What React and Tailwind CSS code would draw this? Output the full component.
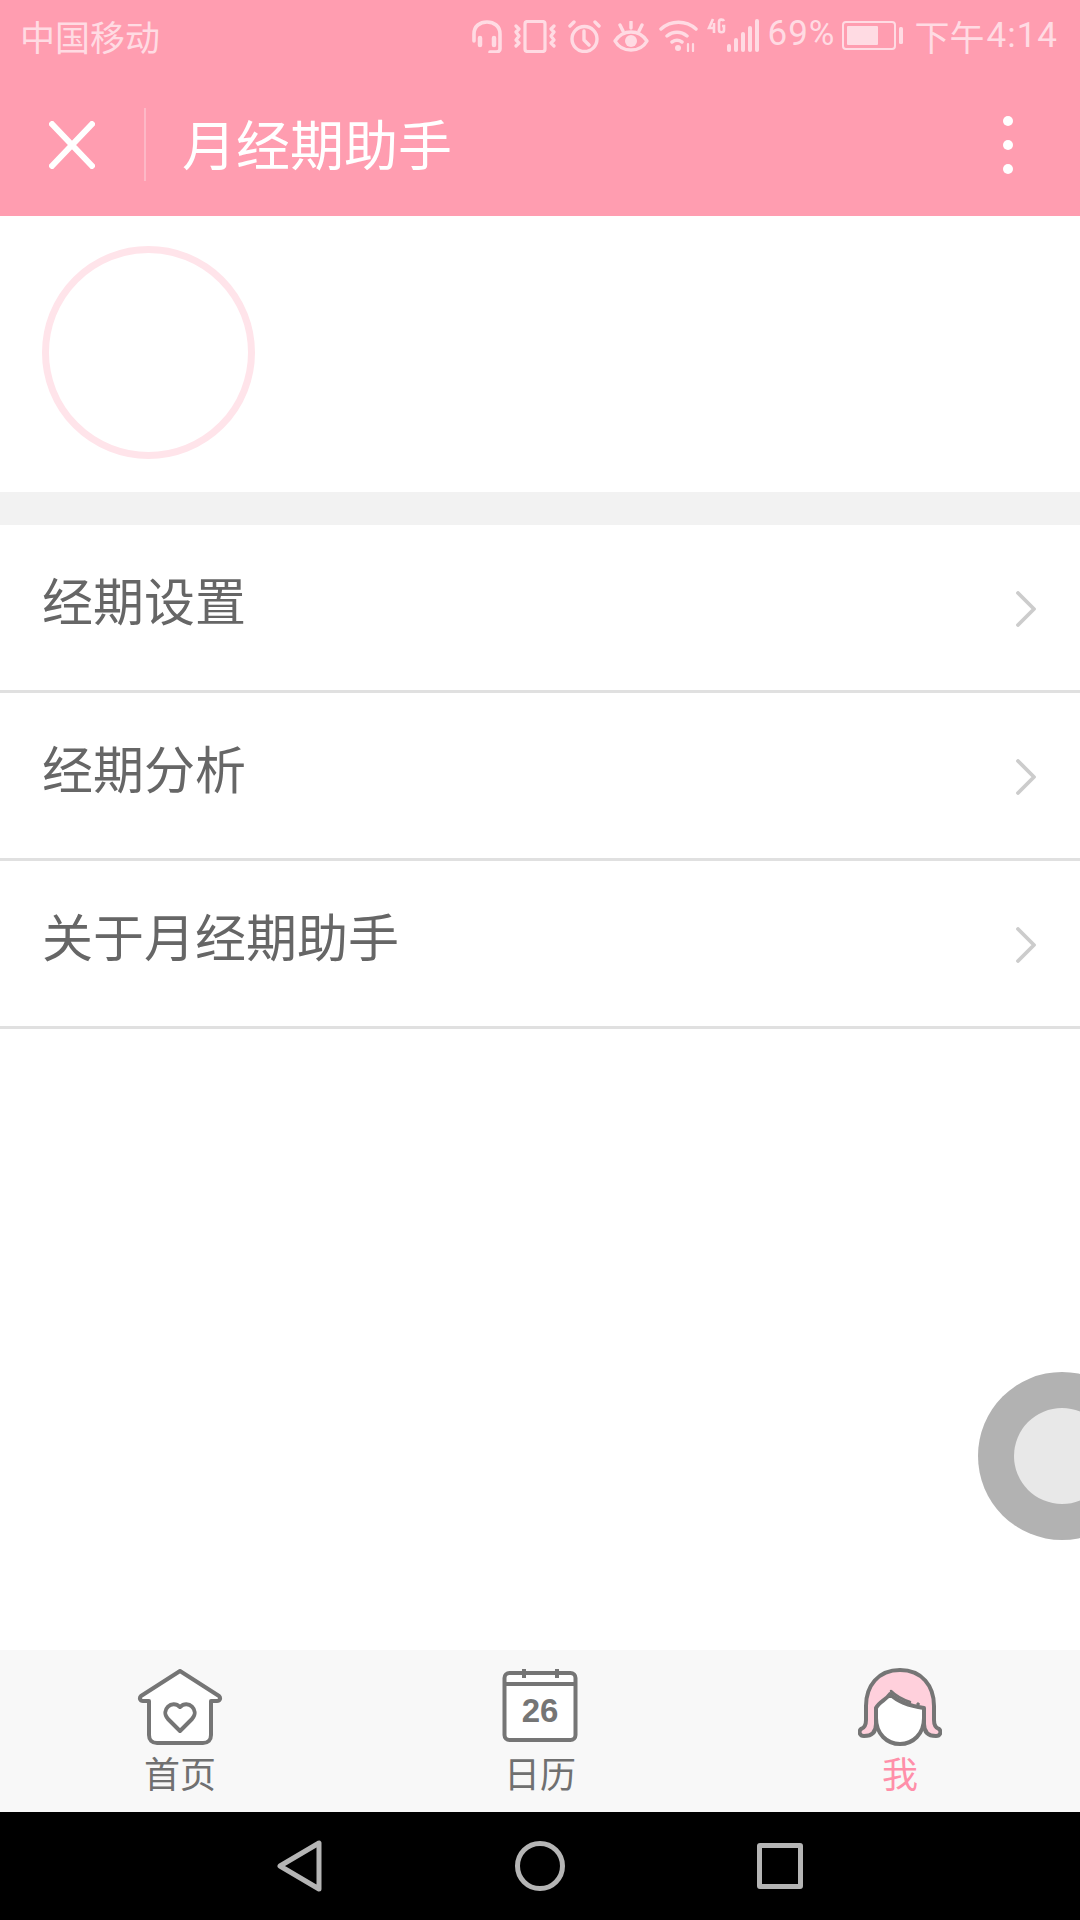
const CJK = { fontFamily: '"Noto Sans CJK SC", "Noto Sans", sans-serif' };

function StatusIcons() {
  const c = "#ffdbe3";
  return (
    <div className="flex items-start">
      <svg width="30" height="33" viewBox="0 0 30 33" fill="none" stroke={c} strokeWidth="3.6" strokeLinecap="round" className="mt-[20px] ml-[2px]">
        <path d="M2 21V14C2 6 8 2 15 2s13 4 13 12v15c0 2-2 3-4 3h-6" />
        <path d="M8 18v7M22 18v7" strokeWidth="4.5" />
      </svg>
      <svg width="42" height="33" viewBox="0 0 42 33" fill="none" stroke={c} strokeWidth="3.2" strokeLinecap="round" strokeLinejoin="round" className="mt-[20px] ml-[12px]">
        <rect x="11" y="1.5" width="20" height="30" rx="2.5" />
        <path d="M2 6l3 3-3 3 3 4-3 4 3 3-3 3M40 6l-3 3 3 3-3 4 3 4-3 3 3 3" />
      </svg>
      <svg width="33" height="33" viewBox="0 0 33 33" fill="none" stroke={c} strokeWidth="3.4" strokeLinecap="round" strokeLinejoin="round" className="mt-[20px] ml-[12px]">
        <circle cx="16.5" cy="19" r="12.5" />
        <path d="M16 11v9l5 5M2 6l4-4M31 6l-4-4" />
      </svg>
      <svg width="36" height="31" viewBox="0 0 36 31" fill="none" stroke={c} strokeWidth="3.4" strokeLinecap="round" strokeLinejoin="round" className="mt-[21px] ml-[12px]">
        <path d="M2 20c4-6 9-9 16-9s12 3 16 9c-4 7-9 9-16 9S6 27 2 20z" />
        <circle cx="18" cy="20" r="6" fill={c} stroke="none" />
        <path d="M18 1v6M7 4l3 6M29 4l-3 6" />
      </svg>
      <svg width="39" height="32" viewBox="0 0 39 32" fill="none" stroke={c} strokeWidth="3.4" strokeLinecap="round" className="mt-[20px] ml-[10px]">
        <path d="M2 9c10-9 25-9 35 0M8 16c6-5 14-5 20 0M13 22c3-2 7-2 10 0" />
        <circle cx="19" cy="28" r="3" fill={c} stroke="none" />
        <path d="M29 24v7M34 24v7" strokeWidth="2.2" />
      </svg>
      <svg width="19" height="16" viewBox="0 0 19 16" fill="none" stroke={c} strokeWidth="2.6" className="mt-[18px] ml-[9px]">
        <path d="M6 1L2 10h6M7 5v10" />
        <path d="M17 3c-1-2-5-2-5 1v8c0 3 5 3 5 0V8h-2" />
      </svg>
      <svg width="35" height="33" viewBox="0 0 35 33" fill={c} className="mt-[19px]">
        <rect x="1" y="25" width="4" height="8" rx="2" />
        <rect x="8" y="19" width="4" height="14" rx="2" />
        <rect x="15" y="13" width="4" height="20" rx="2" />
        <rect x="22" y="7" width="4" height="26" rx="2" />
        <rect x="29" y="0" width="4" height="33" rx="2" />
      </svg>
      <span className="mt-[14px] ml-[6px] w-[65px] text-[35px] leading-[40px] tracking-[1px] whitespace-nowrap" style={{ fontFamily: "Roboto, sans-serif", color: c }}>69%</span>
      <svg width="61" height="29" viewBox="0 0 61 29" fill="none" className="mt-[21px] ml-[10px]">
        <rect x="1" y="1" width="52" height="27" rx="3" stroke={c} strokeWidth="2" />
        <rect x="5" y="5" width="31" height="19" rx="1" fill={c} />
        <rect x="57" y="6" width="4" height="17" rx="1.5" fill={c} />
      </svg>
      <span className="mt-[15px] ml-[11px] text-[35px] leading-[42px] whitespace-nowrap" style={{ ...CJK, color: c }}>下午</span>
      <span className="mt-[15px] ml-[2px] text-[35px] leading-[42px] tracking-[1px]" style={{ fontFamily: "Roboto, sans-serif", color: c }}>4:14</span>
    </div>
  );
}

function Chevron() {
  return (
    <svg width="20" height="36" viewBox="0 0 20 36" fill="none" stroke="#cccccc" strokeWidth="3.8" strokeLinecap="round" strokeLinejoin="round" className="mt-[3px]">
      <path d="M2 2l16 16L2 34" />
    </svg>
  );
}

function Row({ label }) {
  return (
    <div className="h-[168px] border-b-[3px] border-[#e0e0e0] flex items-center justify-between pl-[42px] pr-[44px]">
      <span className="text-[51px] leading-[64px] text-[#666666] mb-[17px]" style={CJK}>{label}</span>
      <Chevron />
    </div>
  );
}

function HomeIcon() {
  return (
    <svg width="86" height="76" viewBox="0 0 86 76" fill="#ffffff" stroke="#757575" strokeWidth="4" strokeLinejoin="round" strokeLinecap="round">
      <path d="M43 2L82 27c2 2 1 5-2 5h-6v34c0 5-3 8-8 8H20c-5 0-8-3-8-8V32H6c-3 0-4-3-2-5z" />
      <path d="M43 62L31 50c-8-9 4-20 12-12 8-8 20 3 12 12z" fill="#ffffff" />
    </svg>
  );
}

function CalendarIcon() {
  return (
    <svg width="76" height="76" viewBox="0 0 76 76" fill="#ffffff" stroke="#757575" strokeWidth="4">
      <rect x="2.5" y="4" width="71" height="67" rx="5" />
      <path d="M2 15h72M22 0v9M55 0v9" fill="none" />
      <text x="38" y="53" textAnchor="middle" fontSize="33" fontWeight="700" fill="#757575" stroke="none" style={{ fontFamily: '"Liberation Sans", sans-serif' }}>26</text>
    </svg>
  );
}

function GirlIcon() {
  return (
    <svg width="84" height="78" viewBox="0 0 84 78" fill="none" stroke="#757575" strokeWidth="4" strokeLinejoin="round" strokeLinecap="round">
      <path d="M18 50c0 16 11 26 24 26s24-10 24-26V28H18z" fill="#ffffff" />
      <path d="M42 2C20 2 8 18 8 38v14c0 5-2 8-5 9-3 3-1 7 3 7 7 0 12-3 12-12V40c3-6 10-8 14-14 8 8 20 12 34 14v16c0 9 5 12 12 12 4 0 6-4 3-7-3-1-5-4-5-9V38C76 18 64 2 42 2z" fill="#ffd0dc" />
      <path d="M33 23c6 6 13 9 19 11" fill="none" strokeWidth="2.5" />
      <circle cx="60" cy="36" r="1.2" fill="#757575" strokeWidth="1" />
    </svg>
  );
}

function Tab({ icon, label, active }) {
  return (
    <div className="flex flex-col items-center pt-[18px]">
      <div className="h-[78px] flex items-center">{icon}</div>
      <span className={`text-[36px] leading-[42px] mt-[5px] ${active ? "text-[#ff8fa9]" : "text-[#707070]"}`} style={CJK}>{label}</span>
    </div>
  );
}

export default function App() {
  return (
    <div className="relative w-[1080px] h-[1920px] bg-white flex flex-col overflow-hidden" style={CJK}>
      <div className="bg-[#ff9db0] h-[216px] shrink-0 flex flex-col">
        <div className="h-[72px] flex justify-between pl-[20px] pr-[22px]">
          <span className="text-[35px] leading-[42px] mt-[15px] text-[#ffdbe3]" style={CJK}>中国移动</span>
          <StatusIcons />
        </div>
        <div className="h-[144px] flex items-start">
          <svg width="46" height="48" viewBox="0 0 46 48" fill="none" stroke="#ffffff" strokeWidth="6" className="ml-[49px] mt-[49px]">
            <path d="M1 1l44 46M45 1L1 47" />
          </svg>
          <div className="w-[2px] h-[73px] bg-[#fdb8c6] ml-[49px] mt-[36px]" />
          <span className="ml-[36px] mt-[39px] text-[54px] leading-[64px] text-white" style={CJK}>月经期助手</span>
          <div className="ml-auto mr-[67px] mt-[44px] flex flex-col gap-[14px]">
            <div className="w-[10px] h-[10px] rounded-full bg-white" />
            <div className="w-[10px] h-[10px] rounded-full bg-white" />
            <div className="w-[10px] h-[10px] rounded-full bg-white" />
          </div>
        </div>
      </div>

      <div className="h-[276px] shrink-0 pl-[42px] pt-[30px]">
        <div className="w-[213px] h-[213px] rounded-full border-[7px] border-[#ffe4ea]" />
      </div>
      <div className="h-[33px] shrink-0 bg-[#f2f2f2]" />

      <div className="flex-1">
        <Row label="经期设置" />
        <Row label="经期分析" />
        <Row label="关于月经期助手" />
      </div>

      <div className="absolute left-[978px] top-[1372px] w-[168px] h-[168px] rounded-full bg-[#b2b2b2] flex items-center justify-center">
        <div className="w-[96px] h-[96px] rounded-full bg-[#e8e8e8]" />
      </div>

      <div className="h-[162px] shrink-0 bg-[#f8f8f8] grid grid-cols-3">
        <Tab icon={<HomeIcon />} label="首页" />
        <Tab icon={<CalendarIcon />} label="日历" />
        <Tab icon={<GirlIcon />} label="我" active />
      </div>

      <div className="h-[108px] shrink-0 bg-black flex items-center justify-center gap-[192px]">
        <svg width="46" height="52" viewBox="0 0 46 52" fill="none" stroke="#b5b5b5" strokeWidth="5" strokeLinejoin="round">
          <path d="M3 26L42 3v46z" />
        </svg>
        <div className="w-[50px] h-[50px] rounded-full border-[5px] border-[#b5b5b5]" />
        <div className="w-[46px] h-[46px] rounded-[3px] border-[5px] border-[#b5b5b5]" />
      </div>
    </div>
  );
}
